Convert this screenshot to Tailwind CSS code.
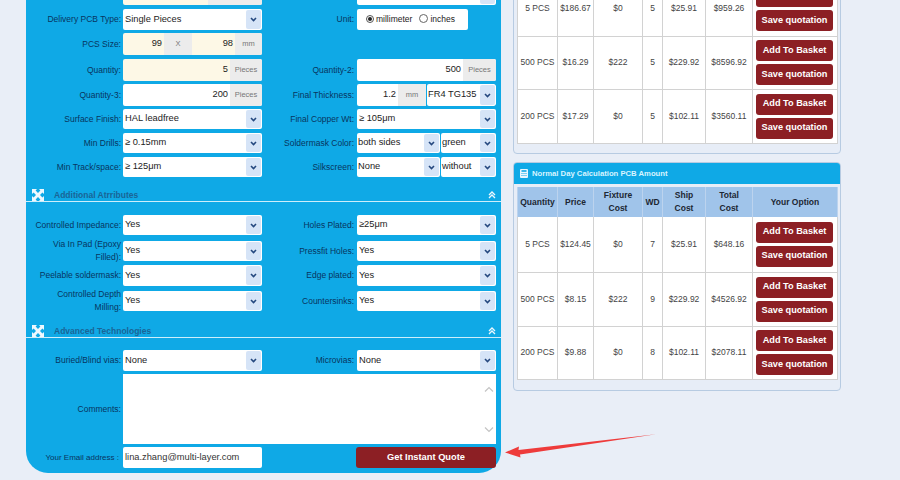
<!DOCTYPE html>
<html><head><meta charset="utf-8"><title>PCB Quote</title>
<script src="https://cdn.jsdelivr.net/npm/@tailwindcss/browser@4"></script>
</head>
<body class="m-0">
<div class="relative w-[900px] h-[480px] overflow-hidden bg-[#e9eef7] font-['Liberation_Sans',Arial,sans-serif] flex items-start">

<form class="ml-[26px] w-[475px] h-[489px] -mt-[16px] bg-[#0fa9e6] rounded-b-[22px] shrink-0 flex flex-col text-[9.3px] text-[#1c1c1c]">
  <div class="grid grid-cols-[97px_139px_95px_139px] h-[21px] shrink-0">
    <span></span>
    <div class="flex rounded-[2px] overflow-hidden bg-[#fdf8e6]"><span class="flex-1"></span><span class="w-[54px] bg-[#ececec]"></span></div>
    <span></span>
    <div class="flex items-center bg-white rounded-[2px]"><span class="flex-1"></span><span class="w-[15px] self-stretch m-[1px] rounded-[2px] bg-[#d6e4f7]"></span></div>
  </div>

  <div class="grid grid-cols-[97px_139px_95px_139px] h-[20px] mt-[4px] shrink-0">
    <label class="text-right pr-[2px] self-center text-[8.5px] text-[#08355f]">Delivery PCB Type:</label>
    <div class="flex items-center bg-white rounded-[2px] pl-[2px]"><span class="flex-1">Single Pieces</span><span class="w-[15px] self-stretch m-[1px] rounded-[2px] bg-[#d6e4f7] flex items-center justify-center"><svg width="7" height="5" viewBox="0 0 7 5"><path d="M1 1l2.5 2.5L6 1" fill="none" stroke="#25487f" stroke-width="1.6"/></svg></span></div>
    <label class="text-right pr-[3px] self-center text-[8.5px] text-[#08355f]">Unit:</label>
    <div class="w-[111px] h-[21px] flex items-center bg-white rounded-[2px] text-[8.5px] pl-[9px]">
      <span class="w-[8px] h-[8px] rounded-full border border-[#555] flex items-center justify-center -mt-[2px]"><span class="w-[4px] h-[4px] rounded-full bg-[#222]"></span></span>
      <span class="ml-[2px]">millimeter</span>
      <span class="w-[9px] h-[9px] rounded-full border border-[#666] bg-white ml-[7px] -mt-[2px]"></span>
      <span class="ml-[2px]">inches</span>
    </div>
  </div>

  <div class="grid grid-cols-[97px_139px_95px_139px] h-[22px] mt-[4px] shrink-0">
    <label class="text-right pr-[2px] self-center text-[8.5px] text-[#08355f]">PCS Size:</label>
    <div class="flex rounded-[2px] overflow-hidden bg-[#fdf8e6] items-stretch">
      <span class="w-[41px] text-right pr-[2px] self-center">99</span>
      <span class="w-[28px] bg-[#ececec] text-[#777] text-[7.5px] flex items-center justify-center">X</span>
      <span class="w-[43px] text-right pr-[2px] self-center">98</span>
      <span class="w-[27px] bg-[#ececec] text-[#777] text-[7.5px] flex items-center justify-center">mm</span>
    </div>
    <span></span><span></span>
  </div>

  <div class="grid grid-cols-[97px_139px_95px_139px] h-[22px] mt-[4px] shrink-0">
    <label class="text-right pr-[2px] self-center text-[8.5px] text-[#08355f]">Quantity:</label>
    <div class="flex rounded-[2px] overflow-hidden bg-[#fdf8e6]"><span class="flex-1 text-right pr-[2px] self-center">5</span><span class="w-[32px] bg-[#ececec] text-[#777] text-[7.5px] flex items-center justify-center">Pieces</span></div>
    <label class="text-right pr-[3px] self-center text-[8.5px] text-[#08355f]">Quantity-2:</label>
    <div class="flex rounded-[2px] overflow-hidden bg-white"><span class="flex-1 text-right pr-[2px] self-center">500</span><span class="w-[33px] bg-[#ececec] text-[#777] text-[7.5px] flex items-center justify-center">Pieces</span></div>
  </div>

  <div class="grid grid-cols-[97px_139px_95px_139px] h-[22px] mt-[3px] shrink-0">
    <label class="text-right pr-[2px] self-center text-[8.5px] text-[#08355f]">Quantity-3:</label>
    <div class="flex rounded-[2px] overflow-hidden bg-white"><span class="flex-1 text-right pr-[2px] self-center">200</span><span class="w-[32px] bg-[#ececec] text-[#777] text-[7.5px] flex items-center justify-center">Pieces</span></div>
    <label class="text-right pr-[3px] self-center text-[8.5px] text-[#08355f]">Final Thickness:</label>
    <div class="flex rounded-[2px] overflow-hidden">
      <span class="w-[41px] bg-white text-right pr-[2px] self-stretch flex items-center justify-end">1.2</span>
      <span class="w-[28px] bg-[#ececec] text-[#777] text-[7.5px] flex items-center justify-center">mm</span>
      <div class="flex-1 ml-[1px] flex items-center bg-white rounded-[2px] pl-[1px]"><span class="flex-1">FR4 TG135</span><span class="w-[15px] self-stretch m-[1px] rounded-[2px] bg-[#d6e4f7] flex items-center justify-center"><svg width="7" height="5" viewBox="0 0 7 5"><path d="M1 1l2.5 2.5L6 1" fill="none" stroke="#25487f" stroke-width="1.6"/></svg></span></div>
    </div>
  </div>

  <div class="grid grid-cols-[97px_139px_95px_139px] h-[20px] mt-[3px] shrink-0">
    <label class="text-right pr-[2px] self-center text-[8.5px] text-[#08355f]">Surface Finish:</label>
    <div class="flex items-center bg-white rounded-[2px] pl-[2px]"><span class="flex-1">HAL leadfree</span><span class="w-[15px] self-stretch m-[1px] rounded-[2px] bg-[#d6e4f7] flex items-center justify-center"><svg width="7" height="5" viewBox="0 0 7 5"><path d="M1 1l2.5 2.5L6 1" fill="none" stroke="#25487f" stroke-width="1.6"/></svg></span></div>
    <label class="text-right pr-[3px] self-center text-[8.5px] text-[#08355f]">Final Copper Wt:</label>
    <div class="flex items-center bg-white rounded-[2px] pl-[2px]"><span class="flex-1">≥ 105μm</span><span class="w-[15px] self-stretch m-[1px] rounded-[2px] bg-[#d6e4f7] flex items-center justify-center"><svg width="7" height="5" viewBox="0 0 7 5"><path d="M1 1l2.5 2.5L6 1" fill="none" stroke="#25487f" stroke-width="1.6"/></svg></span></div>
  </div>

  <div class="grid grid-cols-[97px_139px_95px_139px] h-[20px] mt-[4px] shrink-0">
    <label class="text-right pr-[2px] self-center text-[8.5px] text-[#08355f]">Min Drills:</label>
    <div class="flex items-center bg-white rounded-[2px] pl-[2px]"><span class="flex-1">≥ 0.15mm</span><span class="w-[15px] self-stretch m-[1px] rounded-[2px] bg-[#d6e4f7] flex items-center justify-center"><svg width="7" height="5" viewBox="0 0 7 5"><path d="M1 1l2.5 2.5L6 1" fill="none" stroke="#25487f" stroke-width="1.6"/></svg></span></div>
    <label class="text-right pr-[3px] self-center text-[8.5px] text-[#08355f]">Soldermask Color:</label>
    <div class="flex gap-[1px]">
      <div class="w-[83px] flex items-center bg-white rounded-[2px] pl-[1px]"><span class="flex-1">both sides</span><span class="w-[15px] self-stretch m-[1px] rounded-[2px] bg-[#d6e4f7] flex items-center justify-center"><svg width="7" height="5" viewBox="0 0 7 5"><path d="M1 1l2.5 2.5L6 1" fill="none" stroke="#25487f" stroke-width="1.6"/></svg></span></div>
      <div class="flex-1 flex items-center bg-white rounded-[2px] pl-[1px]"><span class="flex-1">green</span><span class="w-[15px] self-stretch m-[1px] rounded-[2px] bg-[#d6e4f7] flex items-center justify-center"><svg width="7" height="5" viewBox="0 0 7 5"><path d="M1 1l2.5 2.5L6 1" fill="none" stroke="#25487f" stroke-width="1.6"/></svg></span></div>
    </div>
  </div>

  <div class="grid grid-cols-[97px_139px_95px_139px] h-[20px] mt-[4px] shrink-0">
    <label class="text-right pr-[2px] self-center text-[8.5px] text-[#08355f]">Min Track/space:</label>
    <div class="flex items-center bg-white rounded-[2px] pl-[2px]"><span class="flex-1">≥ 125μm</span><span class="w-[15px] self-stretch m-[1px] rounded-[2px] bg-[#d6e4f7] flex items-center justify-center"><svg width="7" height="5" viewBox="0 0 7 5"><path d="M1 1l2.5 2.5L6 1" fill="none" stroke="#25487f" stroke-width="1.6"/></svg></span></div>
    <label class="text-right pr-[3px] self-center text-[8.5px] text-[#08355f]">Silkscreen:</label>
    <div class="flex gap-[1px]">
      <div class="w-[83px] flex items-center bg-white rounded-[2px] pl-[1px]"><span class="flex-1">None</span><span class="w-[15px] self-stretch m-[1px] rounded-[2px] bg-[#d6e4f7] flex items-center justify-center"><svg width="7" height="5" viewBox="0 0 7 5"><path d="M1 1l2.5 2.5L6 1" fill="none" stroke="#25487f" stroke-width="1.6"/></svg></span></div>
      <div class="flex-1 flex items-center bg-white rounded-[2px] pl-[1px]"><span class="flex-1">without</span><span class="w-[15px] self-stretch m-[1px] rounded-[2px] bg-[#d6e4f7] flex items-center justify-center"><svg width="7" height="5" viewBox="0 0 7 5"><path d="M1 1l2.5 2.5L6 1" fill="none" stroke="#25487f" stroke-width="1.6"/></svg></span></div>
    </div>
  </div>

  <div class="h-[16px] mt-[9px] shrink-0 border-b border-[#cdeefb] flex items-end pl-[6px] pr-[5px]">
    <svg width="12" height="12" viewBox="0 0 12 12" fill="#eef8fe"><path d="M0 0h5L3.6 1.6 6 4l2.4-2.4L7 0h5v5l-1.6-1.4L8 6l2.4 2.4L12 7v5H7l1.4-1.6L6 8l-2.4 2.4L5 12H0V7l1.6 1.4L4 6 1.6 3.6 0 5z"/></svg>
    <span class="ml-[10px] text-[8.5px] font-bold text-[#1a6596] leading-[11px]">Additional Atrributes</span>
    <svg class="ml-auto mb-[2px]" width="8" height="8" viewBox="0 0 8 8" fill="none" stroke="#eef8fe" stroke-width="1.3"><path d="M1 4l3-3 3 3M1 7l3-3 3 3"/></svg>
  </div>

  <div class="grid grid-cols-[97px_139px_95px_139px] h-[20px] mt-[13px] shrink-0">
    <label class="text-right pr-[2px] self-center text-[8.5px] text-[#08355f]">Controlled Impedance:</label>
    <div class="flex items-center bg-white rounded-[2px] pl-[2px]"><span class="flex-1">Yes</span><span class="w-[15px] self-stretch m-[1px] rounded-[2px] bg-[#d6e4f7] flex items-center justify-center"><svg width="7" height="5" viewBox="0 0 7 5"><path d="M1 1l2.5 2.5L6 1" fill="none" stroke="#25487f" stroke-width="1.6"/></svg></span></div>
    <label class="text-right pr-[3px] self-center text-[8.5px] text-[#08355f]">Holes Plated:</label>
    <div class="flex items-center bg-white rounded-[2px] pl-[2px]"><span class="flex-1">≥25μm</span><span class="w-[15px] self-stretch m-[1px] rounded-[2px] bg-[#d6e4f7] flex items-center justify-center"><svg width="7" height="5" viewBox="0 0 7 5"><path d="M1 1l2.5 2.5L6 1" fill="none" stroke="#25487f" stroke-width="1.6"/></svg></span></div>
  </div>

  <div class="grid grid-cols-[97px_139px_95px_139px] grid-rows-[20px] h-[20px] mt-[6px] shrink-0">
    <label class="text-right pr-[2px] pl-[6px] self-center text-[8.5px] leading-[13px] text-[#08355f]">Via In Pad (Epoxy Filled):</label>
    <div class="flex items-center bg-white rounded-[2px] pl-[2px]"><span class="flex-1">Yes</span><span class="w-[15px] self-stretch m-[1px] rounded-[2px] bg-[#d6e4f7] flex items-center justify-center"><svg width="7" height="5" viewBox="0 0 7 5"><path d="M1 1l2.5 2.5L6 1" fill="none" stroke="#25487f" stroke-width="1.6"/></svg></span></div>
    <label class="text-right pr-[3px] self-center text-[8.5px] text-[#08355f]">Pressfit Holes:</label>
    <div class="flex items-center bg-white rounded-[2px] pl-[2px]"><span class="flex-1">Yes</span><span class="w-[15px] self-stretch m-[1px] rounded-[2px] bg-[#d6e4f7] flex items-center justify-center"><svg width="7" height="5" viewBox="0 0 7 5"><path d="M1 1l2.5 2.5L6 1" fill="none" stroke="#25487f" stroke-width="1.6"/></svg></span></div>
  </div>

  <div class="grid grid-cols-[97px_139px_95px_139px] h-[21px] mt-[4px] shrink-0">
    <label class="text-right pr-[2px] self-center text-[8.5px] text-[#08355f]">Peelable soldermask:</label>
    <div class="flex items-center bg-white rounded-[2px] pl-[2px]"><span class="flex-1">Yes</span><span class="w-[15px] self-stretch m-[1px] rounded-[2px] bg-[#d6e4f7] flex items-center justify-center"><svg width="7" height="5" viewBox="0 0 7 5"><path d="M1 1l2.5 2.5L6 1" fill="none" stroke="#25487f" stroke-width="1.6"/></svg></span></div>
    <label class="text-right pr-[3px] self-center text-[8.5px] text-[#08355f]">Edge plated:</label>
    <div class="flex items-center bg-white rounded-[2px] pl-[2px]"><span class="flex-1">Yes</span><span class="w-[15px] self-stretch m-[1px] rounded-[2px] bg-[#d6e4f7] flex items-center justify-center"><svg width="7" height="5" viewBox="0 0 7 5"><path d="M1 1l2.5 2.5L6 1" fill="none" stroke="#25487f" stroke-width="1.6"/></svg></span></div>
  </div>

  <div class="grid grid-cols-[97px_139px_95px_139px] grid-rows-[20px] h-[20px] mt-[5px] shrink-0">
    <label class="text-right pr-[2px] pl-[8px] self-center text-[8.5px] leading-[13px] text-[#08355f]">Controlled Depth Milling:</label>
    <div class="flex items-center bg-white rounded-[2px] pl-[2px]"><span class="flex-1">Yes</span><span class="w-[15px] self-stretch m-[1px] rounded-[2px] bg-[#d6e4f7] flex items-center justify-center"><svg width="7" height="5" viewBox="0 0 7 5"><path d="M1 1l2.5 2.5L6 1" fill="none" stroke="#25487f" stroke-width="1.6"/></svg></span></div>
    <label class="text-right pr-[3px] self-center text-[8.5px] text-[#08355f]">Countersinks:</label>
    <div class="flex items-center bg-white rounded-[2px] pl-[2px]"><span class="flex-1">Yes</span><span class="w-[15px] self-stretch m-[1px] rounded-[2px] bg-[#d6e4f7] flex items-center justify-center"><svg width="7" height="5" viewBox="0 0 7 5"><path d="M1 1l2.5 2.5L6 1" fill="none" stroke="#25487f" stroke-width="1.6"/></svg></span></div>
  </div>

  <div class="h-[16px] mt-[11px] shrink-0 border-b border-[#cdeefb] flex items-end pl-[6px] pr-[5px]">
    <svg width="12" height="12" viewBox="0 0 12 12" fill="#eef8fe"><path d="M0 0h5L3.6 1.6 6 4l2.4-2.4L7 0h5v5l-1.6-1.4L8 6l2.4 2.4L12 7v5H7l1.4-1.6L6 8l-2.4 2.4L5 12H0V7l1.6 1.4L4 6 1.6 3.6 0 5z"/></svg>
    <span class="ml-[10px] text-[8.5px] font-bold text-[#1a6596] leading-[11px]">Advanced Technologies</span>
    <svg class="ml-auto mb-[2px]" width="8" height="8" viewBox="0 0 8 8" fill="none" stroke="#eef8fe" stroke-width="1.3"><path d="M1 4l3-3 3 3M1 7l3-3 3 3"/></svg>
  </div>

  <div class="grid grid-cols-[97px_139px_95px_139px] h-[21px] mt-[12px] shrink-0">
    <label class="text-right pr-[2px] self-center text-[8.5px] text-[#08355f]">Buried/Blind vias:</label>
    <div class="flex items-center bg-white rounded-[2px] pl-[2px]"><span class="flex-1">None</span><span class="w-[15px] self-stretch m-[1px] rounded-[2px] bg-[#d6e4f7] flex items-center justify-center"><svg width="7" height="5" viewBox="0 0 7 5"><path d="M1 1l2.5 2.5L6 1" fill="none" stroke="#25487f" stroke-width="1.6"/></svg></span></div>
    <label class="text-right pr-[3px] self-center text-[8.5px] text-[#08355f]">Microvias:</label>
    <div class="flex items-center bg-white rounded-[2px] pl-[2px]"><span class="flex-1">None</span><span class="w-[15px] self-stretch m-[1px] rounded-[2px] bg-[#d6e4f7] flex items-center justify-center"><svg width="7" height="5" viewBox="0 0 7 5"><path d="M1 1l2.5 2.5L6 1" fill="none" stroke="#25487f" stroke-width="1.6"/></svg></span></div>
  </div>

  <div class="grid grid-cols-[97px_373px] h-[70px] mt-[3px] shrink-0">
    <label class="text-right pr-[2px] self-center text-[8.5px] text-[#08355f]">Comments:</label>
    <div class="bg-white flex flex-col items-end justify-between pt-[12px] pb-[11px] pr-[2px]">
      <svg width="10" height="7" viewBox="0 0 10 7" fill="none" stroke="#c4c4c4" stroke-width="1.2"><path d="M1 5.5l4-4 4 4"/></svg>
      <svg width="10" height="7" viewBox="0 0 10 7" fill="none" stroke="#c4c4c4" stroke-width="1.2"><path d="M1 1.5l4 4 4-4"/></svg>
    </div>
  </div>

  <div class="grid grid-cols-[97px_139px_94px_140px] h-[21px] mt-[3px] shrink-0">
    <label class="text-right pr-[4px] self-center text-[8px] text-[#08355f]">Your Email address :</label>
    <div class="flex items-center bg-white rounded-[2px] pl-[2px] text-[#333]">lina.zhang@multi-layer.com</div>
    <span></span>
    <button type="button" class="bg-[#8c1f24] rounded-[3px] text-white text-[9.3px] font-bold text-center">Get Instant Quote</button>
  </div>
</form>

<div class="ml-[12px] w-[328px] -mt-[20px] shrink-0 flex flex-col text-[8.5px] text-[#444]">
  <section class="h-[174px] bg-[#e7edf7] border border-[#b7cbe2] rounded-[4px] px-[3px] pt-[1px]">
    <table class="w-[320px] table-fixed border-collapse bg-white text-center">
      <colgroup><col class="w-[40px]"><col class="w-[36px]"><col class="w-[49px]"><col class="w-[20px]"><col class="w-[43px]"><col class="w-[47px]"><col class="w-[85px]"></colgroup>
      <tbody>
        <tr class="h-[54px] border-b border-[#d2d2d2] *:border-x *:border-[#d2d2d2]">
          <td>5 PCS</td><td>$186.67</td><td>$0</td><td>5</td><td>$25.91</td><td>$959.26</td>
          <td class="px-[3px]"><div class="flex flex-col gap-[3px] w-[77px]"><button type="button" class="h-[21px] bg-[#8c1f24] rounded-[3px] text-white text-[9.2px] font-bold">Add To Basket</button><button type="button" class="h-[21px] bg-[#8c1f24] rounded-[3px] text-white text-[9.2px] font-bold">Save quotation</button></div></td>
        </tr>
        <tr class="h-[53px] border-b border-[#d2d2d2] *:border-x *:border-[#d2d2d2]">
          <td>500 PCS</td><td>$16.29</td><td>$222</td><td>5</td><td>$229.92</td><td>$8596.92</td>
          <td class="px-[3px]"><div class="flex flex-col gap-[3px] w-[77px]"><button type="button" class="h-[21px] bg-[#8c1f24] rounded-[3px] text-white text-[9.2px] font-bold">Add To Basket</button><button type="button" class="h-[21px] bg-[#8c1f24] rounded-[3px] text-white text-[9.2px] font-bold">Save quotation</button></div></td>
        </tr>
        <tr class="h-[54px] border-b border-[#d2d2d2] *:border-x *:border-[#d2d2d2]">
          <td>200 PCS</td><td>$17.29</td><td>$0</td><td>5</td><td>$102.11</td><td>$3560.11</td>
          <td class="px-[3px]"><div class="flex flex-col gap-[3px] w-[77px]"><button type="button" class="h-[21px] bg-[#8c1f24] rounded-[3px] text-white text-[9.2px] font-bold">Add To Basket</button><button type="button" class="h-[21px] bg-[#8c1f24] rounded-[3px] text-white text-[9.2px] font-bold">Save quotation</button></div></td>
        </tr>
      </tbody>
    </table>
  </section>

  <section class="mt-[8px] h-[229px] bg-[#e7edf7] border border-[#b7cbe2] rounded-[4px] overflow-hidden">
    <div class="h-[21px] bg-[#0fa9e6] flex items-center pl-[6px] text-[7.7px] font-bold text-[#d8f4ff]">
      <svg width="8" height="9" viewBox="0 0 8 9"><rect width="8" height="9" rx="1" fill="#e8f7fe"/><rect x="1.5" y="1.2" width="5" height="1.6" fill="#0fa9e6"/><path d="M1.5 4h1v1h-1zM3.5 4h1v1h-1zM5.5 4h1v1h-1zM1.5 6h1v1h-1zM3.5 6h1v1h-1zM5.5 6h1v1h-1z" fill="#0fa9e6"/></svg>
      <span class="ml-[4px]">Normal Day Calculation PCB Amount</span>
    </div>
    <table class="ml-[3px] mt-[3px] w-[320px] table-fixed border-collapse bg-white text-center">
      <colgroup><col class="w-[40px]"><col class="w-[36px]"><col class="w-[49px]"><col class="w-[20px]"><col class="w-[43px]"><col class="w-[47px]"><col class="w-[85px]"></colgroup>
      <thead>
        <tr class="h-[30px] bg-[#a0c4ea] text-[#1d2733] leading-[13px] font-bold *:border-x *:border-[#bcd3ee]">
          <th>Quantity</th><th>Price</th><th>Fixture<br>Cost</th><th>WD</th><th>Ship<br>Cost</th><th>Total<br>Cost</th><th>Your Option</th>
        </tr>
      </thead>
      <tbody>
        <tr class="h-[55px] border-b border-[#d2d2d2] *:border-x *:border-[#d2d2d2]">
          <td>5 PCS</td><td>$124.45</td><td>$0</td><td>7</td><td>$25.91</td><td>$648.16</td>
          <td class="px-[3px]"><div class="flex flex-col gap-[3px] w-[77px]"><button type="button" class="h-[21px] bg-[#8c1f24] rounded-[3px] text-white text-[9.2px] font-bold">Add To Basket</button><button type="button" class="h-[21px] bg-[#8c1f24] rounded-[3px] text-white text-[9.2px] font-bold">Save quotation</button></div></td>
        </tr>
        <tr class="h-[54px] border-b border-[#d2d2d2] *:border-x *:border-[#d2d2d2]">
          <td>500 PCS</td><td>$8.15</td><td>$222</td><td>9</td><td>$229.92</td><td>$4526.92</td>
          <td class="px-[3px]"><div class="flex flex-col gap-[3px] w-[77px]"><button type="button" class="h-[21px] bg-[#8c1f24] rounded-[3px] text-white text-[9.2px] font-bold">Add To Basket</button><button type="button" class="h-[21px] bg-[#8c1f24] rounded-[3px] text-white text-[9.2px] font-bold">Save quotation</button></div></td>
        </tr>
        <tr class="h-[53px] border-b border-[#d2d2d2] *:border-x *:border-[#d2d2d2]">
          <td>200 PCS</td><td>$9.88</td><td>$0</td><td>8</td><td>$102.11</td><td>$2078.11</td>
          <td class="px-[3px]"><div class="flex flex-col gap-[3px] w-[77px]"><button type="button" class="h-[21px] bg-[#8c1f24] rounded-[3px] text-white text-[9.2px] font-bold">Add To Basket</button><button type="button" class="h-[21px] bg-[#8c1f24] rounded-[3px] text-white text-[9.2px] font-bold">Save quotation</button></div></td>
        </tr>
      </tbody>
    </table>
  </section>
</div>

<svg class="absolute left-[500px] top-[430px]" width="160" height="30" viewBox="0 0 160 30"><path d="M5 22.5L19 16.5l-.5 3.5L156 4.3 20 24.5l.5 3z" fill="#ee3b3b"/></svg>
</div>
</body></html>
